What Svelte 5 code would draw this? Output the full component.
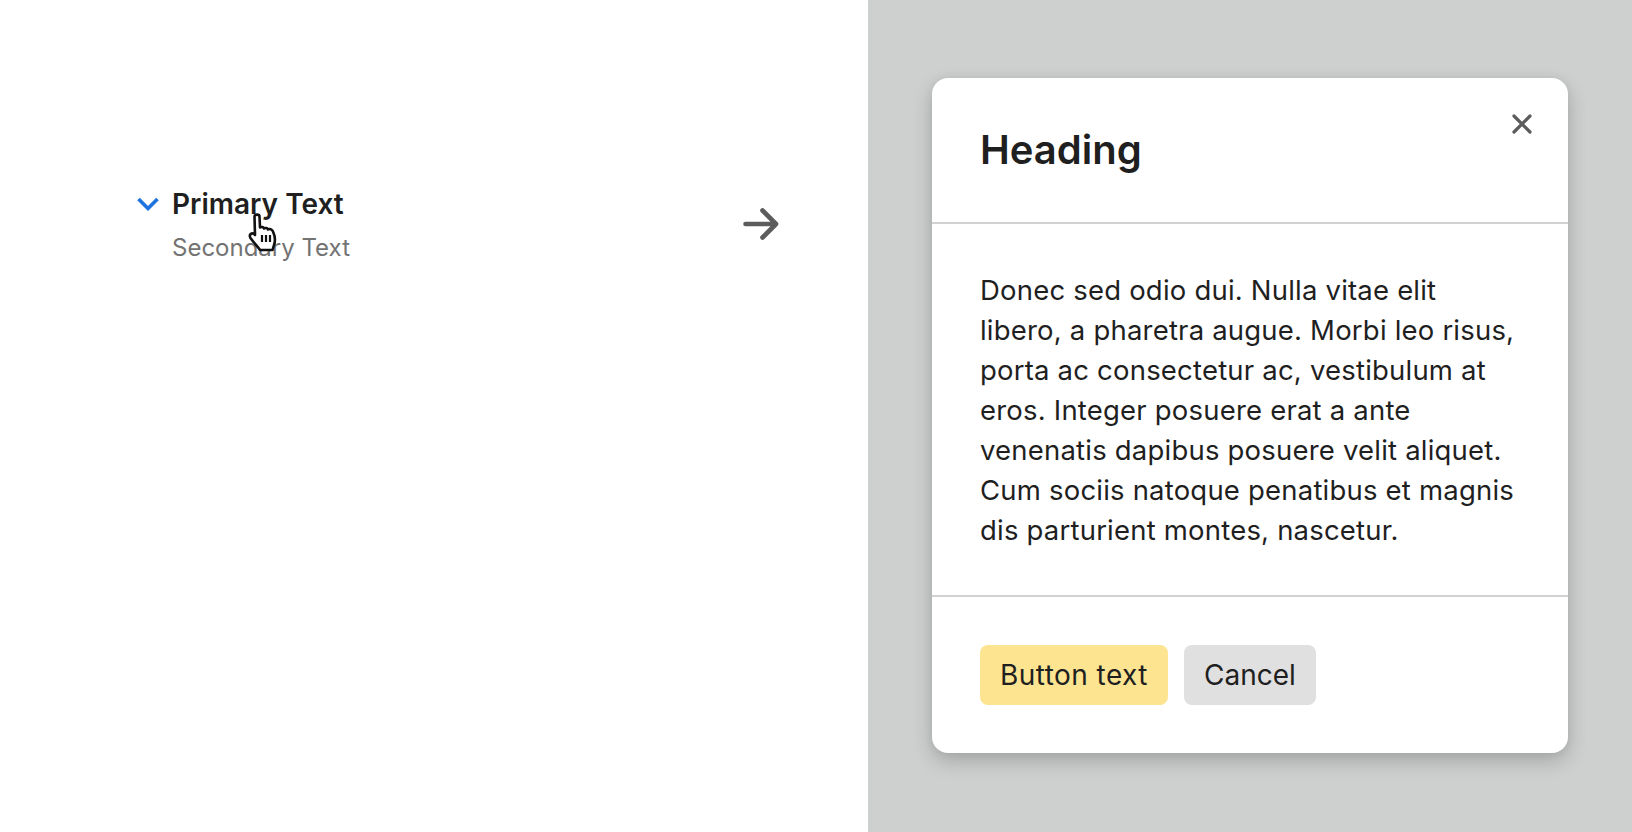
<script lang="ts">
  const body =
    'Donec sed odio dui. Nulla vitae elit libero, a pharetra augue. Morbi leo risus, porta ac consectetur ac, vestibulum at eros. Integer posuere erat a ante venenatis dapibus posuere velit aliquet. Cum sociis natoque penatibus et magnis dis parturient montes, nascetur.';
</script>

<div class="page">
  <section class="before">
    <div class="item">
      <svg class="chevron" width="22" height="14" viewBox="0 0 22 14" aria-hidden="true">
        <path d="M1.5 2 L11 11.5 L20.5 2" fill="none" stroke="#1f74e0" stroke-width="3.6" />
      </svg>
      <div class="labels">
        <div class="primary">Primary Text</div>
        <div class="secondary">Secondary Text</div>
      </div>
      <svg class="cursor" width="32" height="40" viewBox="0 0 32 40" aria-hidden="true">
        <path
          d="M7.5 3.5 C7.5 1 12.5 1 12.5 3.5 L13 14.5 C14.5 13.5 16.5 14 17 15.5 C18.5 14.5 20.5 15 21 16.5 C22.5 15.5 25 16 26 18.5 C28 23 28.5 28 27 32 L25.5 37 L13 37 C11 34 7 30 3.5 25 C1.5 21.5 5 18.5 8 22 Z"
          fill="#fff"
          stroke="#111"
          stroke-width="2.6"
          stroke-linejoin="round"
        />
        <path d="M15 22 V29 M19 22 V29 M23 22 V29" stroke="#111" stroke-width="2.2" />
      </svg>
    </div>
    <svg class="arrow" width="38" height="36" viewBox="0 0 38 36" aria-hidden="true">
      <path
        d="M3.5 18 H33 M20.5 4.5 L34 18 L20.5 31.5"
        fill="none"
        stroke="#5c5c5c"
        stroke-width="4.6"
        stroke-linecap="round"
        stroke-linejoin="round"
      />
    </svg>
  </section>
  <section class="after">
    <div class="modal" role="dialog" aria-label="Heading">
      <header>
        <h2>Heading</h2>
        <button class="close" aria-label="Close">
          <svg width="20" height="20" viewBox="0 0 20 20" aria-hidden="true">
            <path d="M2 2 L18 18 M18 2 L2 18" stroke="#5c5c5c" stroke-width="3.2" stroke-linecap="round" />
          </svg>
        </button>
      </header>
      <div class="body">
        <p>{body}</p>
      </div>
      <footer>
        <button class="btn primary-btn">Button text</button>
        <button class="btn cancel">Cancel</button>
      </footer>
    </div>
  </section>
</div>

<style>
  :global(body) {
    margin: 0;
    background: #fff;
  }
  .page {
    display: flex;
    height: 832px;
    overflow: hidden;
    font-family: Inter, 'Noto Sans', sans-serif;
    color: #1f1f1f;
  }
  .before {
    flex: 0 0 868px;
    box-sizing: border-box;
    display: flex;
    justify-content: space-between;
    align-items: flex-start;
    padding: 186px 88px 0 137px;
  }
  .item {
    position: relative;
    display: flex;
    gap: 13px;
  }
  .chevron {
    margin-top: 11px;
  }
  .primary {
    font-size: 28px;
    line-height: 36px;
    font-weight: 600;
  }
  .secondary {
    margin-top: 10px;
    font-size: 24px;
    line-height: 32px;
    color: #737373;
  }
  .cursor {
    position: absolute;
    left: 110px;
    top: 27px;
  }
  .arrow {
    margin-top: 20px;
  }
  .after {
    flex: 1;
    box-sizing: border-box;
    padding: 78px 64px 0;
    background: #ced0cf;
  }
  .modal {
    width: 636px;
    background: #fff;
    border-radius: 16px;
    box-shadow:
      0 8px 20px rgba(0, 0, 0, 0.2),
      0 0 10px rgba(0, 0, 0, 0.05);
  }
  header {
    position: relative;
    padding: 48px;
    border-bottom: 2px solid #d2d2d2;
  }
  h2 {
    margin: 0;
    font-size: 40px;
    line-height: 48px;
    font-weight: 600;
  }
  .close {
    position: absolute;
    top: 36px;
    right: 36px;
    padding: 0;
    border: none;
    background: none;
    line-height: 0;
  }
  .body {
    padding: 46px 48px 45px;
    border-bottom: 2px solid #d2d2d2;
  }
  p {
    margin: 0;
    font-size: 27.5px;
    font-weight: 380;
    letter-spacing: 0.2px;
    line-height: 40px;
  }
  footer {
    display: flex;
    gap: 16px;
    padding: 48px;
  }
  .btn {
    height: 60px;
    padding: 0 20px;
    border: none;
    border-radius: 8px;
    font: inherit;
    font-size: 28px;
    font-weight: 380;
    color: #1f1f1f;
  }
  .primary-btn {
    letter-spacing: 0.45px;
    background: #fce491;
  }
  .cancel {
    background: #e0e0e0;
  }
</style>
